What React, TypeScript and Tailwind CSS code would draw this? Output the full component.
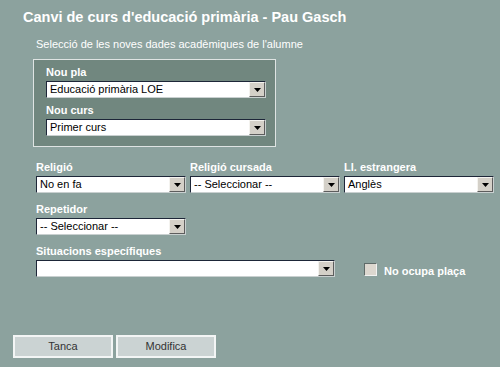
import React from "react";

function Arrow() {
  return (
    <span className="flex h-[15px] w-[16px] shrink-0 items-center justify-center border border-t-[#f4f3ef] border-l-[#f4f3ef] border-b-[#5d5d5d] border-r-[#5d5d5d] bg-[#d4d0c8]">
      <svg width="7" height="4" viewBox="0 0 7 4">
        <path d="M0 0h7L3.5 4z" fill="#000" />
      </svg>
    </span>
  );
}

function Sel({ value, w }: { value: string; w: string }) {
  return (
    <div
      className={`flex h-[17px] ${w} items-center border border-t-[#1d2638] border-l-[#1d2638] border-b-[#c9d0d0] border-r-[#c9d0d0] bg-white`}
    >
      <span className="flex-1 truncate pl-[3px] text-[11px] leading-[15px] text-black">{value}</span>
      <Arrow />
    </div>
  );
}

function Label({ children }: { children: React.ReactNode }) {
  return <div className="h-[16px] text-[11px] font-bold leading-[14px] text-white">{children}</div>;
}

export default function App() {
  return (
    <div
      className="relative h-[367px] w-[500px] overflow-hidden bg-[#8ca29e]"
      style={{ fontFamily: '"Liberation Sans", Arial, sans-serif' }}
    >
      {/* Title */}
      <h1 className="pl-[23px] pt-[8px] text-[14.5px] font-bold leading-[18px] text-white">
        Canvi de curs d'educació primària - Pau Gasch
      </h1>

      <div className="pl-[36px]">
        <p className="mt-[12px] text-[11px] leading-[13px] text-white">
          Selecció de les noves dades acadèmiques de l'alumne
        </p>

        {/* Pla / curs box */}
        <div className="-ml-[3px] mt-[8px] w-[243px] border border-[#dfe4e3] bg-[#71877f] px-[12px] pb-[10px] pt-[5px]">
          <Label>Nou pla</Label>
          <Sel value="Educació primària LOE" w="w-[220px]" />
          <div className="mt-[5px]">
            <Label>Nou curs</Label>
          </div>
          <Sel value="Primer curs" w="w-[220px]" />
        </div>

        {/* Row 1 */}
        <div className="mt-[13px] flex gap-[4px]">
          <div>
            <Label>Religió</Label>
            <Sel value="No en fa" w="w-[150px]" />
          </div>
          <div>
            <Label>Religió cursada</Label>
            <Sel value="-- Seleccionar --" w="w-[150px]" />
          </div>
          <div>
            <Label>Ll. estrangera</Label>
            <Sel value="Anglès" w="w-[150px]" />
          </div>
        </div>

        <div className="mt-[9px]">
          <Label>Repetidor</Label>
          <Sel value="-- Seleccionar --" w="w-[150px]" />
        </div>

        <div className="mt-[9px]">
          <Label>Situacions específiques</Label>
          <div className="flex items-start">
            <Sel value="" w="w-[299px]" />
            <label className="ml-[29px] flex items-center gap-[7px]">
              <span className="h-[13px] w-[13px] border border-t-[#5f6b69] border-l-[#5f6b69] border-b-[#f2f2f2] border-r-[#f2f2f2] bg-[#dcd7cf]" />
              <span className="pt-[3px] text-[11px] font-bold text-white">No ocupa plaça</span>
            </label>
          </div>
        </div>
      </div>

      {/* Buttons */}
      <div className="absolute left-[13px] top-[335px] flex gap-[3px]">
        <button className="h-[23px] w-[100px] border-2 border-[#f3f5f5] bg-[#cbd3d3] text-[11px] text-[#333]">
          Tanca
        </button>
        <button className="h-[23px] w-[100px] border-2 border-[#f3f5f5] bg-[#cbd3d3] text-[11px] text-[#333]">
          Modifica
        </button>
      </div>
    </div>
  );
}
